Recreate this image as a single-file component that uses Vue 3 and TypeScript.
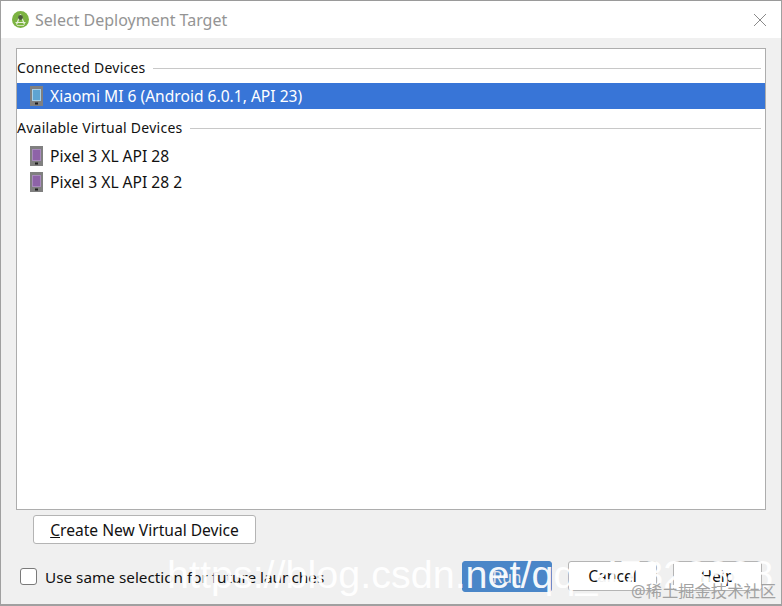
<template>
  <div class="dialog">
    <header class="titlebar">
      <svg class="logo" width="17" height="17" viewBox="0 0 17 17">
        <circle cx="8.5" cy="8.5" r="8.5" fill="#7cb342" />
        <path d="M8.5 3.5 L12.5 13.5 M8.5 3.5 L4.5 13.5" stroke="#e8f0dc" stroke-width="1.2" fill="none" />
        <path d="M3.5 11.5 H13.5" stroke="#e8f0dc" stroke-width="1" />
        <circle cx="8.5" cy="6.5" r="2.4" fill="#4a5a3c" />
        <path d="M5 14.5 L12 14.5" stroke="#cfe0b4" stroke-width="1" />
      </svg>
      <span class="title">Select Deployment Target</span>
      <svg class="close" width="14" height="14" viewBox="0 0 14 14">
        <path d="M1 1 L13 13 M13 1 L1 13" stroke="#8a8a8a" stroke-width="1" />
      </svg>
    </header>

    <main class="body">
      <section class="panel">
        <div v-for="group in groups" :key="group.name" class="group">
          <div class="group-head">
            <span>{{ group.name }}</span>
            <i class="rule"></i>
          </div>
          <div
            v-for="device in group.devices"
            :key="device.label"
            class="device"
            :class="{ selected: device.selected }"
          >
            <svg width="13" height="20" viewBox="0 0 13 20">
              <rect width="13" height="20" fill="#808080" />
              <rect x="2" y="3" width="9" height="12" :fill="device.selected ? '#5ea4d2' : '#8e63a8'" />
              <rect x="2.5" y="3.5" width="8" height="11" fill="none" :stroke="device.selected ? '#a8d0e8' : '#a88bbd'" />
              <rect x="5" y="16.5" width="3" height="2" fill="#1e1e1e" />
            </svg>
            <span>{{ device.label }}</span>
          </div>
        </div>
      </section>

      <div class="create-row">
        <button class="btn create"><u>C</u>reate New Virtual Device</button>
      </div>

      <footer class="footer">
        <label class="same">
          <i class="check"></i>
          <span>Use same selection for future launches</span>
        </label>
        <div class="actions">
          <button class="btn primary">Run</button>
          <button class="btn">Cancel</button>
          <button class="btn">Help</button>
        </div>
      </footer>
    </main>

    <div class="watermark">https://blog.csdn.net/qq_47328808</div>
    <div class="juejin">@稀土掘金技术社区</div>
  </div>
</template>

<script setup lang="ts">
interface Device {
  label: string;
  selected?: boolean;
}

const groups: { name: string; devices: Device[] }[] = [
  {
    name: "Connected Devices",
    devices: [{ label: "Xiaomi MI 6 (Android 6.0.1, API 23)", selected: true }],
  },
  {
    name: "Available Virtual Devices",
    devices: [{ label: "Pixel 3 XL API 28" }, { label: "Pixel 3 XL API 28 2" }],
  },
];
</script>

<style>
html,
body {
  margin: 0;
  background: #fff;
}
</style>

<style scoped>
.dialog {
  position: relative;
  width: 782px;
  height: 606px;
  box-sizing: border-box;
  overflow: hidden;
  display: flex;
  flex-direction: column;
  border-top: 1px solid #9a9a9a;
  border-left: 1px solid #a0a0a0;
  border-right: 1px solid #a0a0a0;
  border-bottom: 2px solid #a0a0a0;
  font-family: "Noto Sans", "Noto Sans CJK SC", sans-serif;
  color: #111;
}

.titlebar {
  height: 37px;
  flex: none;
  display: flex;
  align-items: center;
  padding: 0 14px 0 11px;
  background: #fff;
}

.title {
  margin-left: 6px;
  font-size: 16px;
  color: #949494;
}

.close {
  margin-left: auto;
}

.body {
  flex: 1;
  display: flex;
  flex-direction: column;
  background: #f0f0f0;
  padding: 10px 15px 0 15px;
}

.panel {
  height: 462px;
  box-sizing: border-box;
  flex: none;
  background: #fff;
  border: 1px solid #adadad;
}

.group-head {
  height: 24px;
  margin: 7px 0 3px;
  display: flex;
  align-items: center;
  gap: 7px;
  font-size: 14px;
  letter-spacing: 0.25px;
  padding-right: 4px;
}

.group-head span {
  position: relative;
  top: -1px;
}

.rule {
  flex: 1;
  height: 1px;
  background: #c8c8c8;
}

.device {
  height: 26px;
  display: flex;
  align-items: center;
  gap: 7px;
  padding-left: 13px;
  font-size: 15.6px;
}

.device.selected {
  background: #3875d7;
  color: #fff;
}

.create-row {
  padding: 5px 0 0 17px;
}

.btn {
  height: 29px;
  box-sizing: border-box;
  padding: 0;
  background: #fff;
  border: 1px solid #b4b4b4;
  border-radius: 3px;
  font: inherit;
  font-size: 15.6px;
  color: #111;
}

.create {
  width: 223px;
}

.footer {
  margin-top: 17px;
  display: flex;
  align-items: center;
  justify-content: space-between;
  padding-left: 4px;
}

.same {
  display: flex;
  align-items: center;
  gap: 8px;
  font-size: 15.3px;
}

.check {
  width: 17px;
  height: 17px;
  box-sizing: border-box;
  background: #fff;
  border: 1px solid #7a7a7a;
  border-radius: 3px;
}

.actions {
  display: flex;
  gap: 16px;
  padding-right: 4px;
}

.actions .btn {
  width: 89px;
  height: 30px;
}

.primary.btn {
  width: 90px;
  height: 31px;
  background: #4a86c8;
  border-color: #4a86c8;
  color: #e8e4ea;
}

.watermark {
  position: absolute;
  left: 166px;
  top: 551px;
  font-family: "Liberation Sans", sans-serif;
  font-size: 39.5px;
  white-space: nowrap;
  color: rgba(255, 255, 255, 0.95);
}

.juejin {
  position: absolute;
  right: 5px;
  bottom: 2px;
  font-size: 16.3px;
  color: #a2a2a2;
}
</style>
